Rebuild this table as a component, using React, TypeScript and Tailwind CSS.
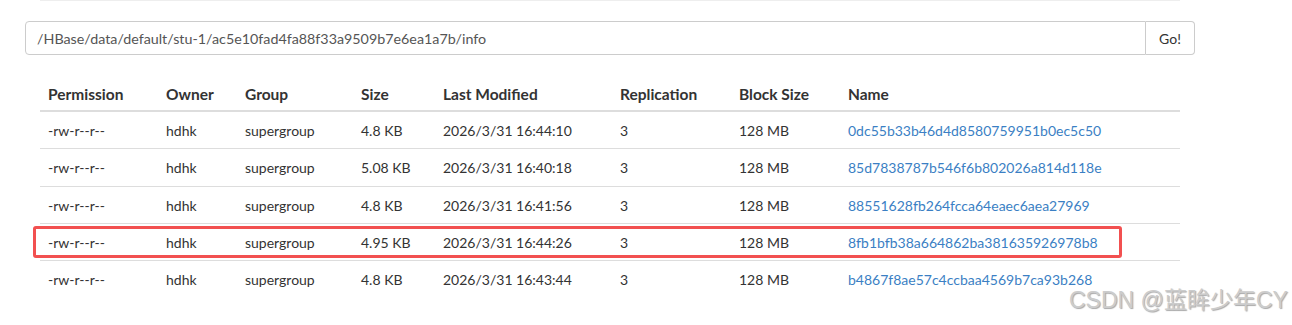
const rows = [
  { size: "4.8 KB", modified: "2026/3/31 16:44:10", name: "0dc55b33b46d4d8580759951b0ec5c50" },
  { size: "5.08 KB", modified: "2026/3/31 16:40:18", name: "85d7838787b546f6b802026a814d118e" },
  { size: "4.8 KB", modified: "2026/3/31 16:41:56", name: "88551628fb264fcca64eaec6aea27969" },
  { size: "4.95 KB", modified: "2026/3/31 16:44:26", name: "8fb1bfb38a664862ba381635926978b8" },
  { size: "4.8 KB", modified: "2026/3/31 16:43:44", name: "b4867f8ae57c4ccbaa4569b7ca93b268" },
];

const cols = [
  { label: "Permission", w: "w-[118px]" },
  { label: "Owner", w: "w-[79px]" },
  { label: "Group", w: "w-[116px]" },
  { label: "Size", w: "w-[82px]" },
  { label: "Last Modified", w: "w-[177px]" },
  { label: "Replication", w: "w-[119px]" },
  { label: "Block Size", w: "w-[109px]" },
  { label: "Name", w: "w-[340px]" },
];

export default function App() {
  return (
    <div className="relative w-[1292px] h-[325px] overflow-hidden bg-white font-['Lato',sans-serif] text-[14px] text-[#333]">
      <div className="ml-[40px] w-[1140px] border-t border-[#eee]" />

      {/* path box */}
      <div className="mt-[20px] ml-[25px] flex h-[34px] w-[1170px]">
        <input
          readOnly
          value="/HBase/data/default/stu-1/ac5e10fad4fa88f33a9509b7e6ea1a7b/info"
          className="h-full flex-1 rounded-l-[4px] border border-[#ccc] px-[11px] text-[14.3px] text-[#555] outline-none"
        />
        <button className="h-full w-[49px] rounded-r-[4px] border border-l-0 border-[#ccc] bg-white text-[14px] text-[#333]">
          Go!
        </button>
      </div>

      <table className="mt-[19px] ml-[40px] w-[1140px] table-fixed border-collapse text-left">
        <thead>
          <tr>
            {cols.map((c) => (
              <th
                key={c.label}
                className={`${c.w} border-b-2 border-[#ddd] px-2 pt-[10px] pb-[6px] text-[15.5px] leading-5 font-bold`}
              >
                {c.label}
              </th>
            ))}
          </tr>
        </thead>
        <tbody>
          {rows.map((r) => (
            <tr key={r.name} className="border-t border-[#ddd]">
              <td className="px-2 pt-[9px] pb-[7px] leading-[20.3px]">-rw-r--r--</td>
              <td className="px-2 pt-[9px] pb-[7px] leading-[20.3px]">hdhk</td>
              <td className="px-2 pt-[9px] pb-[7px] leading-[20.3px]">supergroup</td>
              <td className="px-2 pt-[9px] pb-[7px] leading-[20.3px]">{r.size}</td>
              <td className="px-2 pt-[9px] pb-[7px] leading-[20.3px]">{r.modified}</td>
              <td className="px-2 pt-[9px] pb-[7px] leading-[20.3px]">3</td>
              <td className="px-2 pt-[9px] pb-[7px] leading-[20.3px]">128 MB</td>
              <td className="px-2 pt-[9px] pb-[7px] leading-[20.3px]">
                <a href="#" className="text-[#3b7fc4]">{r.name}</a>
              </td>
            </tr>
          ))}
        </tbody>
      </table>

      {/* annotation box over the 4th row */}
      <div className="absolute left-[33px] top-[226px] h-[32px] w-[1089px] rounded-[3px] border-[3px] border-[#f25050]" />

      {/* watermark */}
      <div className="absolute left-[1069px] top-[283px] whitespace-nowrap font-['Liberation_Sans','Noto_Sans_CJK_SC',sans-serif] text-[23px] text-[#cccccc] [text-shadow:1px_1px_1px_#a8a8a8]">
        CSDN @蓝眸少年CY
      </div>
    </div>
  );
}
